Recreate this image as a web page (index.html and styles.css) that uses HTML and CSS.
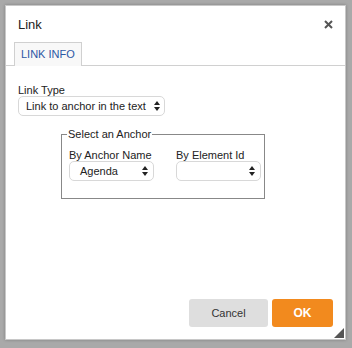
FILE: index.html
```html
<!DOCTYPE html>
<html>
<head>
<meta charset="utf-8">
<link rel="stylesheet" href="styles.css">
</head>
<body>
<div class="dialog">
  <div class="header">
    <span class="title">Link</span>
    <svg class="close" width="9" height="9" viewBox="0 0 9 9"><path d="M1 1L8 8M8 1L1 8" stroke="#555" stroke-width="2"/></svg>
  </div>
  <div class="tabs">
    <div class="tab">LINK INFO</div>
  </div>
  <div class="content">
    <div class="label">Link Type</div>
    <div class="select sel-type"><span>Link to anchor in the text</span><svg class="arr" width="6" height="10" viewBox="0 0 6 10"><path d="M3 0L6 4H0Z M3 10L0 6H6Z" fill="#222"/></svg></div>
    <fieldset class="anchor">
      <legend>Select an Anchor</legend>
      <div class="cols">
        <div class="col">
          <div class="label">By Anchor Name</div>
          <div class="select sel-small"><span>Agenda</span><svg class="arr" width="6" height="10" viewBox="0 0 6 10"><path d="M3 0L6 4H0Z M3 10L0 6H6Z" fill="#222"/></svg></div>
        </div>
        <div class="col">
          <div class="label">By Element Id</div>
          <div class="select sel-small"><span></span><svg class="arr" width="6" height="10" viewBox="0 0 6 10"><path d="M3 0L6 4H0Z M3 10L0 6H6Z" fill="#222"/></svg></div>
        </div>
      </div>
    </fieldset>
  </div>
  <div class="footer">
    <div class="btn cancel">Cancel</div>
    <div class="btn ok">OK</div>
  </div>
  <div class="grip"></div>
</div>
</body>
</html>
```
FILE: styles.css
```css
html, body { margin: 0; padding: 0; }
body {
  background: #a9a9a9;
  width: 352px;
  height: 348px;
  padding: 5px 0 0 5px;
  box-sizing: border-box;
  font-family: "Liberation Sans", Arial, sans-serif;
  color: #222;
}
.dialog {
  position: relative;
  width: 341px;
  height: 335px;
  background: #fff;
  box-shadow: 0 0 3px rgba(0,0,0,0.25);
  border: 1px solid #c8c8c8;
  box-sizing: border-box;
  display: flex;
  flex-direction: column;
}
.header {
  height: 35px;
  display: flex;
  align-items: center;
  justify-content: space-between;
  padding: 0 12px 0 12px;
  box-sizing: border-box;
}
.title { font-size: 13px; color: #222; margin-top: 1px; }
.close { margin-top: 1px; }
.tabs {
  height: 24px;
  border-bottom: 1px solid #d0d0d0;
  padding-left: 8px;
  display: flex;
  align-items: flex-end;
}
.tab {
  box-sizing: border-box;
  border: 1px solid #d0d0d0;
  border-bottom: none;
  background: #f8f8f8;
  padding: 0 6px;
  font-size: 11px;
  color: #2c57a5;
  line-height: 22px;
  margin-bottom: -1px;
  height: 24px;
  white-space: nowrap;
}
.content {
  flex: 1;
  padding: 18px 12px 0 12px;
}
.label { font-size: 11px; line-height: 12px; color: #222; white-space: nowrap; }
.select {
  display: flex;
  align-items: center;
  justify-content: space-between;
  border: 1px solid #d8d8d8;
  border-radius: 5px;
  box-sizing: border-box;
  height: 20px;
  font-size: 11px;
  background: #fff;
  margin-top: 0;
  white-space: nowrap;
}
.sel-type { width: 147px; padding: 0 4px 0 7px; }
.sel-small { width: 85px; padding: 0 5px 0 10px; }
.anchor {
  margin: 12px 0 0 43px;
  width: 204px;
  height: 71px;
  box-sizing: border-box;
  border: 1px solid #888;
  padding: 0 0 0 7px;
}
.anchor legend {
  font-size: 11px;
  padding: 0 1px;
  margin-left: -2px;
  color: #222;
}
.cols { display: flex; gap: 22px; margin-top: 9px; }
.footer {
  display: flex;
  justify-content: flex-end;
  gap: 4px;
  padding: 0 12px 12px 0;
}
.btn {
  height: 28px;
  line-height: 28px;
  text-align: center;
  border-radius: 3px;
  font-size: 11px;
}
.cancel { width: 79px; background: #dedede; color: #333; }
.ok { width: 61px; background: #f28a1e; color: #fff; font-weight: bold; font-size: 12px; }
.grip {
  position: absolute;
  right: 1px;
  bottom: 1px;
  width: 0;
  height: 0;
  border-left: 10px solid transparent;
  border-bottom: 10px solid #555;
}
```
